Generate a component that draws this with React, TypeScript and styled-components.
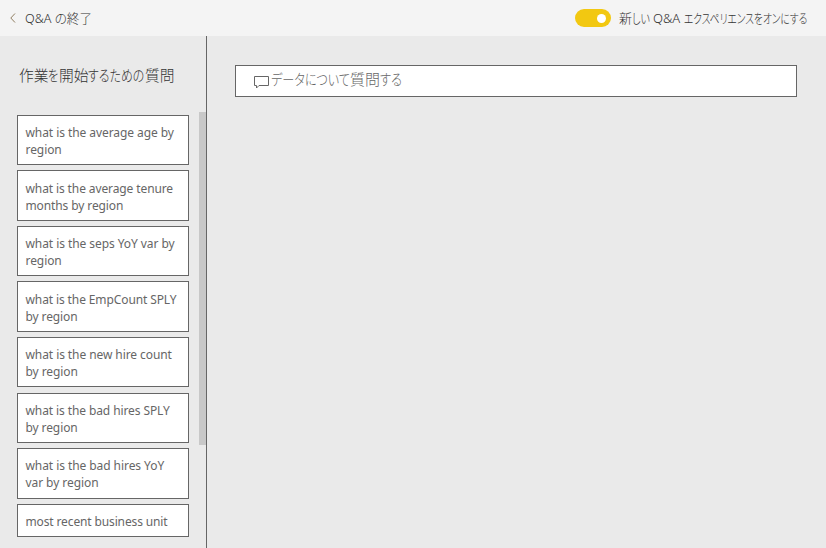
import React, { useLayoutEffect, useRef, useState } from "react";
import styled, { createGlobalStyle } from "styled-components";

const GlobalStyle = createGlobalStyle`
  * { box-sizing: border-box; }
  html, body, #root { height: 100%; }
  body {
    margin: 0;
    overflow: hidden;
    background: #eaeaea;
    font-family: "Noto Sans", "Noto Sans CJK JP", sans-serif;
    font-feature-settings: "palt";
  }
`;

const Page = styled.div`
  display: flex;
  flex-direction: column;
  width: 826px;
  height: 548px;
`;

const TopBar = styled.header`
  display: flex;
  align-items: center;
  justify-content: space-between;
  flex: 0 0 36px;
  padding: 0 19px 0 10px;
  background: #f4f4f4;
`;

const BackButton = styled.button`
  display: flex;
  align-items: center;
  gap: 9px;
  padding: 0;
  border: 0;
  background: none;
  font-family: inherit;
  font-feature-settings: inherit;
`;

const Label = styled.span<{ $size: number; $color?: string }>`
  display: flex;
  font-size: ${(p) => p.$size}px;
  font-weight: 300;
  line-height: 20px;
  color: ${(p) => p.$color ?? "#333"};
  white-space: pre;
`;

const Run = styled.span<{ $width: number }>`
  display: block;
  flex: none;
  width: ${(p) => p.$width}px;
`;

const RunInner = styled.span`
  display: inline-block;
  transform-origin: 0 50%;
`;

/* A run of text, scaled horizontally to a given width. */
function FittedRun({ width, children }: { width: number; children: string }) {
  const ref = useRef<HTMLSpanElement>(null);
  const [scale, setScale] = useState(1);
  useLayoutEffect(() => {
    if (ref.current) setScale(width / ref.current.offsetWidth);
  }, [width, children]);
  return (
    <Run $width={width}>
      <RunInner ref={ref} style={{ transform: `scaleX(${scale})` }}>
        {children}
      </RunInner>
    </Run>
  );
}

const ToggleGroup = styled.label`
  display: flex;
  align-items: center;
  width: 232px;
  gap: 8px;
`;

const Switch = styled.span`
  display: flex;
  flex: none;
  align-items: center;
  justify-content: flex-end;
  width: 36px;
  height: 18px;
  padding-right: 5px;
  border-radius: 9px;
  background: #f2c811;
`;

const Knob = styled.span`
  width: 9px;
  height: 9px;
  border-radius: 50%;
  background: #fff;
`;

const Body = styled.div`
  display: flex;
  flex: 1;
  min-height: 0;
`;

const Sidebar = styled.aside`
  display: flex;
  flex-direction: column;
  flex: 0 0 207px;
  border-right: 1px solid #666;
`;

const Heading = styled.h2`
  flex: 0 0 76px;
  margin: 0;
  padding: 29px 0 0 18.5px;
  line-height: 20px;
  font-size: 15px;
`;

const ListArea = styled.div`
  display: flex;
  justify-content: space-between;
  flex: 1;
  min-height: 0;
`;

const QuestionList = styled.div`
  display: flex;
  flex-direction: column;
  gap: 5.12px;
  padding: 2.8px 0 0 17px;
`;

const Question = styled.button<{ $spacing: number; $single?: boolean }>`
  flex: none;
  width: 172px;
  height: ${(p) => (p.$single ? 33.3 : 50.45)}px;
  padding: 1.9px 0 0 7.5px;
  border: 1px solid #666;
  background: #fff;
  color: #666;
  font-family: "Noto Sans", sans-serif;
  font-size: 12px;
  line-height: 17px;
  letter-spacing: ${(p) => p.$spacing}px;
  text-align: left;
  white-space: pre;
`;

const ScrollThumb = styled.div`
  width: 7px;
  height: 333px;
  background: #c8c8c8;
`;

const Main = styled.main`
  flex: 1;
  padding: 29px 29px 0 28px;
`;

const SearchBox = styled.div`
  display: flex;
  align-items: center;
  gap: 1px;
  height: 32px;
  padding: 0 0 5px 18px;
  border: 1px solid #666;
  background: #fff;
`;

const BubbleIcon = styled.svg`
  flex: none;
  margin-top: 6px;
`;

const questions = [
  { text: "what is the average age by\nregion", spacing: -0.07 },
  { text: "what is the average tenure\nmonths by region", spacing: -0.11 },
  { text: "what is the seps YoY var by\nregion", spacing: -0.07 },
  { text: "what is the EmpCount SPLY\nby region", spacing: -0.11 },
  { text: "what is the new hire count\nby region", spacing: -0.08 },
  { text: "what is the bad hires SPLY\nby region", spacing: -0.1 },
  { text: "what is the bad hires YoY\nvar by region", spacing: -0.07 },
  { text: "most recent business unit", spacing: -0.13, single: true },
];

export default function App() {
  return (
    <Page>
      <GlobalStyle />
      <TopBar>
        <BackButton>
          <svg width="6" height="10" viewBox="0 0 6 10" fill="none">
            <path d="M5 0.5 L0.8 5 L5 9.5" stroke="#8f7d60" strokeWidth="1" />
          </svg>
          <Label $size={13}>
            <FittedRun width={67}>{"Q&A の終了"}</FittedRun>
          </Label>
        </BackButton>
        <ToggleGroup>
          <Switch>
            <Knob />
          </Switch>
          <Label $size={13}>
            <FittedRun width={13}>新</FittedRun>
            <FittedRun width={21}>{"しい "}</FittedRun>
            <FittedRun width={31}>{"Q&A "}</FittedRun>
            <FittedRun width={123}>エクスペリエンスをオンにする</FittedRun>
          </Label>
        </ToggleGroup>
      </TopBar>
      <Body>
        <Sidebar>
          <Heading>
            <Label $size={15}>
              <FittedRun width={29.5}>作業</FittedRun>
              <FittedRun width={10.5}>を</FittedRun>
              <FittedRun width={29.5}>開始</FittedRun>
              <FittedRun width={56.5}>するための</FittedRun>
              <FittedRun width={29.5}>質問</FittedRun>
            </Label>
          </Heading>
          <ListArea>
            <QuestionList>
              {questions.map((q) => (
                <Question key={q.text} $spacing={q.spacing} $single={q.single}>
                  {q.text}
                </Question>
              ))}
            </QuestionList>
            <ScrollThumb />
          </ListArea>
        </Sidebar>
        <Main>
          <SearchBox>
            <BubbleIcon width="16" height="14" viewBox="0 0 16 14" fill="none">
              <path d="M0.5 1.5 H14.5 V10.5 H5 L2.5 13 V10.5 H0.5 Z" stroke="#666" />
            </BubbleIcon>
            <Label $size={15} $color="#666">
              <FittedRun width={79}>データについて</FittedRun>
              <FittedRun width={30}>質問</FittedRun>
              <FittedRun width={22}>する</FittedRun>
            </Label>
          </SearchBox>
        </Main>
      </Body>
    </Page>
  );
}
